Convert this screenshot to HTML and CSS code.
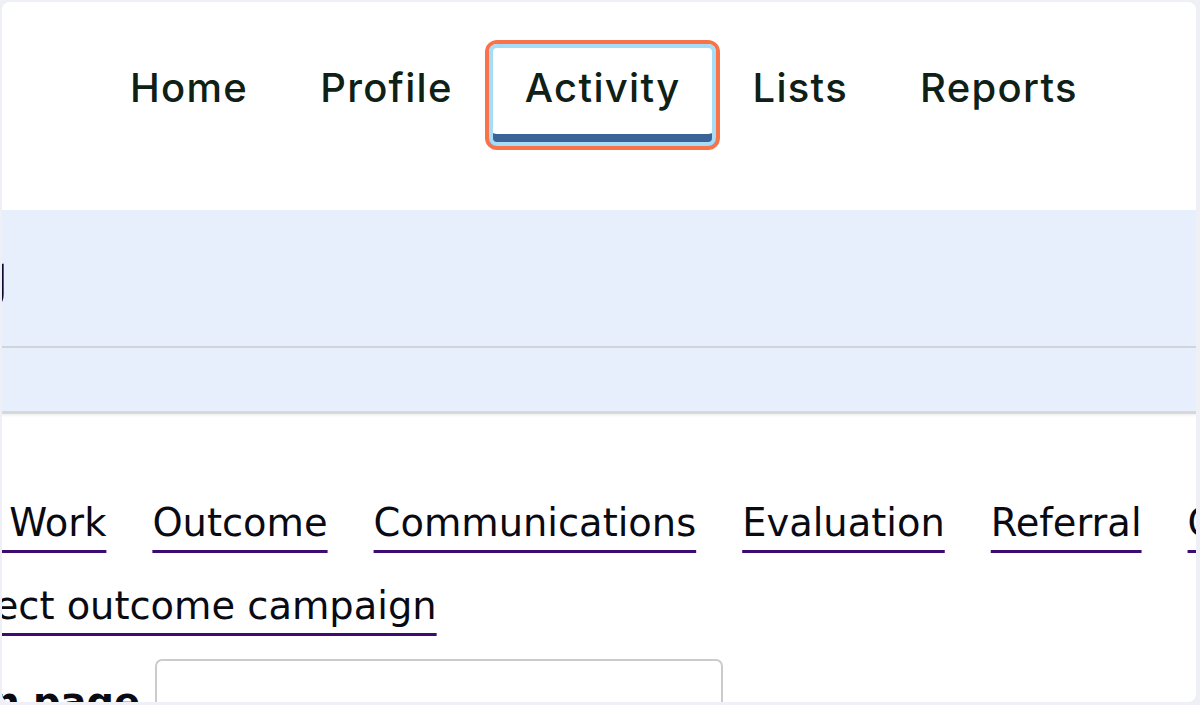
FILE: index.html
```html
<!DOCTYPE html>
<html lang="en">
<head>
<meta charset="utf-8">
<title>Activity</title>
<link rel="stylesheet" href="styles.css">
</head>
<body>
<div class="panel">
  <nav class="topnav">
    <a class="nav-item" href="#">Home</a>
    <a class="nav-item" href="#">Profile</a>
    <a class="nav-item active" href="#">Activity</a>
    <a class="nav-item" href="#">Lists</a>
    <a class="nav-item" href="#">Reports</a>
  </nav>
  <header class="band">
    <div class="band-head">
      <h1 class="title">Activity Listing</h1>
    </div>
    <div class="band-sub"></div>
  </header>
  <main class="content">
    <div class="links">
      <a class="link" href="#">Case Work</a>
      <a class="link" href="#">Outcome</a>
      <a class="link" href="#">Communications</a>
      <a class="link" href="#">Evaluation</a>
      <a class="link" href="#">Referral</a>
      <a class="link" href="#">Contacts</a>
    </div>
    <div class="select-row">
      <a class="link" href="#">Select outcome campaign</a>
    </div>
    <div class="field-row">
      <label class="field-label" for="page">Donation page</label>
      <input class="field-input" id="page" type="text">
    </div>
  </main>
</div>
</body>
</html>
```
FILE: styles.css
```css
html, body {
  margin: 0;
  padding: 0;
}
body {
  background: #eff0f5;
  overflow: hidden;
}
.panel {
  margin: 2px 4px 0 2px;
  height: 700px;
  background: #ffffff;
  border-radius: 8px;
  overflow: hidden;
}
.topnav {
  display: flex;
  align-items: flex-start;
  gap: 0;
  height: 208px;
  box-sizing: border-box;
  padding: 42px 0 0 92px;
}
.nav-item {
  display: block;
  padding: 20px 36px 34px 36px;
  font-family: Inter, "Liberation Sans", sans-serif;
  font-weight: 500;
  font-size: 40px;
  letter-spacing: 1.3px;
  line-height: 48px;
  color: #0f2016;
  text-decoration: none;
  border-radius: 8px;
}
.nav-item.active {
  background: #ffffff;
  box-shadow: 0 0 0 4px #f9734a, inset 0 0 0 4px #a7dcf6, inset 0 -12px 0 0 #3b6398;
}
.band {
  background: #e8effc;
  border-bottom: 3px solid #d6d8dc;
  box-shadow: 0 2px 2px rgba(0, 0, 0, 0.05);
}
.band-head {
  height: 138px;
  box-sizing: border-box;
  padding-top: 32px;
  border-bottom: 2px solid #d1d5db;
}
.title {
  margin: 0 0 0 -993px;
  width: 1000px;
  text-align: right;
  white-space: nowrap;
  font-family: "DejaVu Sans", sans-serif;
  font-weight: 700;
  font-size: 62px;
  line-height: 70px;
  color: #0b0b2c;
}
.band-sub {
  height: 63px;
}
.content {
  padding-top: 86px;
  font-family: "DejaVu Sans", sans-serif;
  font-size: 38.4px;
  line-height: 46px;
  color: #0a0a12;
}
.links {
  display: flex;
  gap: 46px;
  margin-left: -99px;
  white-space: nowrap;
}
.link {
  color: #0a0a12;
  text-decoration: underline;
  text-decoration-color: #3d0c72;
  text-decoration-thickness: 3px;
  text-underline-offset: 14px;
  text-decoration-skip-ink: none;
  white-space: nowrap;
}
.select-row {
  margin: 37px 0 0 -66px;
  white-space: nowrap;
}
.field-row {
  display: flex;
  gap: 15px;
  margin: 30px 0 0 -462px;
}
.field-label {
  flex: none;
  width: 600px;
  padding-top: 20px;
  text-align: right;
  white-space: nowrap;
  font-weight: 700;
}
.field-input {
  flex: none;
  width: 568px;
  height: 72px;
  box-sizing: border-box;
  border: 2px solid #cbcbcb;
  border-radius: 7px;
  background: #ffffff;
  font: inherit;
}
```
